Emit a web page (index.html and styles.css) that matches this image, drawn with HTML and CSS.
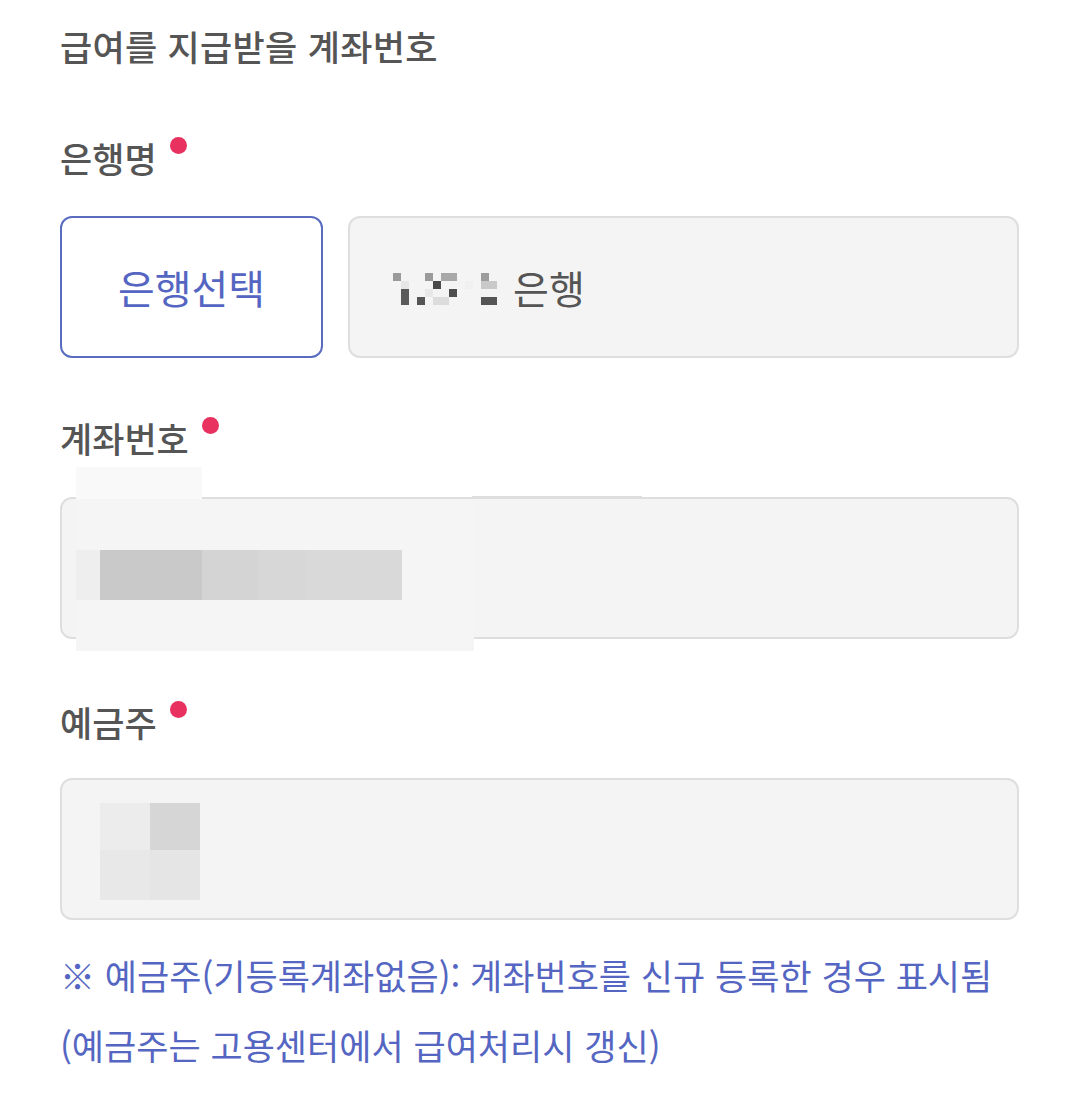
FILE: index.html
```html
<!DOCTYPE html>
<html lang="ko">
<head>
<meta charset="utf-8">
<link rel="stylesheet" href="styles.css">
</head>
<body>
<main class="page">
  <h1 class="title">급여를 지급받을 계좌번호</h1>

  <section class="group group-bank">
    <div class="label">은행명<span class="dot"></span></div>
    <div class="bank-row">
      <button class="bank-btn">은행선택</button>
      <div class="field bank-field">
        <span class="mosaic mosaic-bank">
          <i class="px" style="left:0;top:5px;background:#9a9a9a"></i>
          <i class="px" style="left:8px;top:13px;background:#e6e6e6"></i>
          <i class="px" style="left:8px;top:21px;background:#5a5a5a"></i>
          <i class="px" style="left:8px;top:29px;background:#5a5a5a"></i>
          <i class="px" style="left:32px;top:5px;background:#9a9a9a"></i>
          <i class="px" style="left:40px;top:13px;background:#4a4a4a"></i>
          <i class="px" style="left:24px;top:29px;background:#555"></i>
          <i class="px" style="left:48px;top:5px;background:#a8a8a8"></i>
          <i class="px" style="left:56px;top:5px;background:#a8a8a8"></i>
          <i class="px" style="left:56px;top:21px;background:#4e4e4e"></i>
          <i class="px" style="left:40px;top:29px;background:#dcdcdc"></i>
          <i class="px" style="left:48px;top:29px;background:#dcdcdc"></i>
          <i class="px" style="left:32px;top:21px;background:#e8e8e8"></i>
          <i class="px" style="left:88px;top:5px;background:#9c9c9c"></i>
          <i class="px wide" style="left:88px;top:13px;background:#c9c9c9"></i>
          <i class="px wide" style="left:88px;top:29px;background:#555"></i>
          <i class="px" style="left:72px;top:13px;background:#f0f0f0"></i>
        </span>
        <span class="bank-name">은행</span>
      </div>
    </div>
  </section>

  <section class="group group-account">
    <div class="label">계좌번호<span class="dot"></span></div>
    <div class="field wide-field account-field">
      <span class="patch" style="left:14px;top:-32px;width:126px;height:36px;background:#f9f9f9"></span>
      <span class="patch" style="left:14px;top:0;width:398px;height:152px;background:#f5f5f5"></span>
      <span class="patch" style="left:410px;top:-3px;width:170px;height:3px;background:#dedede"></span>
      <span class="patch" style="left:38px;top:51px;width:102px;height:50px;background:#c9c9c9"></span>
      <span class="patch" style="left:140px;top:51px;width:56px;height:50px;background:#d4d4d4"></span>
      <span class="patch" style="left:196px;top:51px;width:48px;height:50px;background:#d7d7d7"></span>
      <span class="patch" style="left:244px;top:51px;width:96px;height:50px;background:#d9d9d9"></span>
      <span class="patch" style="left:14px;top:51px;width:24px;height:50px;background:#eeeeee"></span>
    </div>
  </section>

  <section class="group group-owner">
    <div class="label">예금주<span class="dot"></span></div>
    <div class="field wide-field owner-field">
      <span class="patch" style="left:38px;top:23px;width:50px;height:47px;background:#ececec"></span>
      <span class="patch" style="left:88px;top:23px;width:50px;height:47px;background:#d6d6d6"></span>
      <span class="patch" style="left:38px;top:70px;width:50px;height:50px;background:#e8e8e8"></span>
      <span class="patch" style="left:88px;top:70px;width:50px;height:50px;background:#e5e5e5"></span>
    </div>
  </section>

  <p class="note">※ 예금주(기등록계좌없음): 계좌번호를 신규 등록한 경우 표시됨<br>(예금주는 고용센터에서 급여처리시 갱신)</p>
</main>
</body>
</html>
```

FILE: styles.css
```css
* { box-sizing: border-box; }

html, body {
  margin: 0;
  padding: 0;
  background: #ffffff;
}

body {
  font-family: "Noto Sans CJK KR", "Noto Sans", sans-serif;
  color: #555555;
}

.page {
  width: 1080px;
  padding: 21px 61px 0 60px;
  display: flex;
  flex-direction: column;
}

.title {
  margin: 0;
  font-size: 35px;
  line-height: 50px;
  font-weight: 500;
  color: #555555;
  letter-spacing: 0.3px;
}

.group-bank { margin-top: 62px; }
.group-account { margin-top: 55px; }
.group-owner { margin-top: 58px; }

.label {
  display: flex;
  align-items: flex-start;
  font-size: 35px;
  line-height: 50px;
  font-weight: 500;
  color: #555555;
  margin-bottom: 33px;
}

.group-owner .label { margin-bottom: 31px; }
.group-account .label { margin-bottom: 34px; }

.dot {
  display: inline-block;
  width: 17px;
  height: 17px;
  border-radius: 50%;
  background: #e8315f;
  margin-left: 13px;
  margin-top: 4px;
}

.bank-row {
  display: flex;
  gap: 25px;
}

.bank-btn {
  width: 263px;
  height: 142px;
  flex: none;
  background: #ffffff;
  border: 2.5px solid #5a6cbf;
  border-radius: 12px;
  font-family: "Noto Sans CJK KR", "Noto Sans", sans-serif;
  font-size: 40px;
  font-weight: 400;
  color: #5566c2;
  padding: 0;
}

.field {
  position: relative;
  height: 142px;
  background: #f4f4f4;
  border: 2.5px solid #dedede;
  border-radius: 12px;
}

.bank-field {
  flex: 1;
  display: flex;
  align-items: center;
  padding-left: 43px;
}

.bank-name {
  font-size: 39px;
  color: #555555;
  margin-left: 0;
}

.mosaic-bank {
  position: relative;
  display: inline-block;
  width: 120px;
  height: 40px;
  margin-top: 2px;
}

.px {
  position: absolute;
  width: 8px;
  height: 8px;
}

.px.wide { width: 16px; }

.wide-field { width: 100%; }

.patch {
  position: absolute;
  display: block;
}

.note {
  margin: 20px 0 0 0;
  font-size: 35px;
  line-height: 70px;
  color: #5566c2;
  font-weight: 400;
}
```
